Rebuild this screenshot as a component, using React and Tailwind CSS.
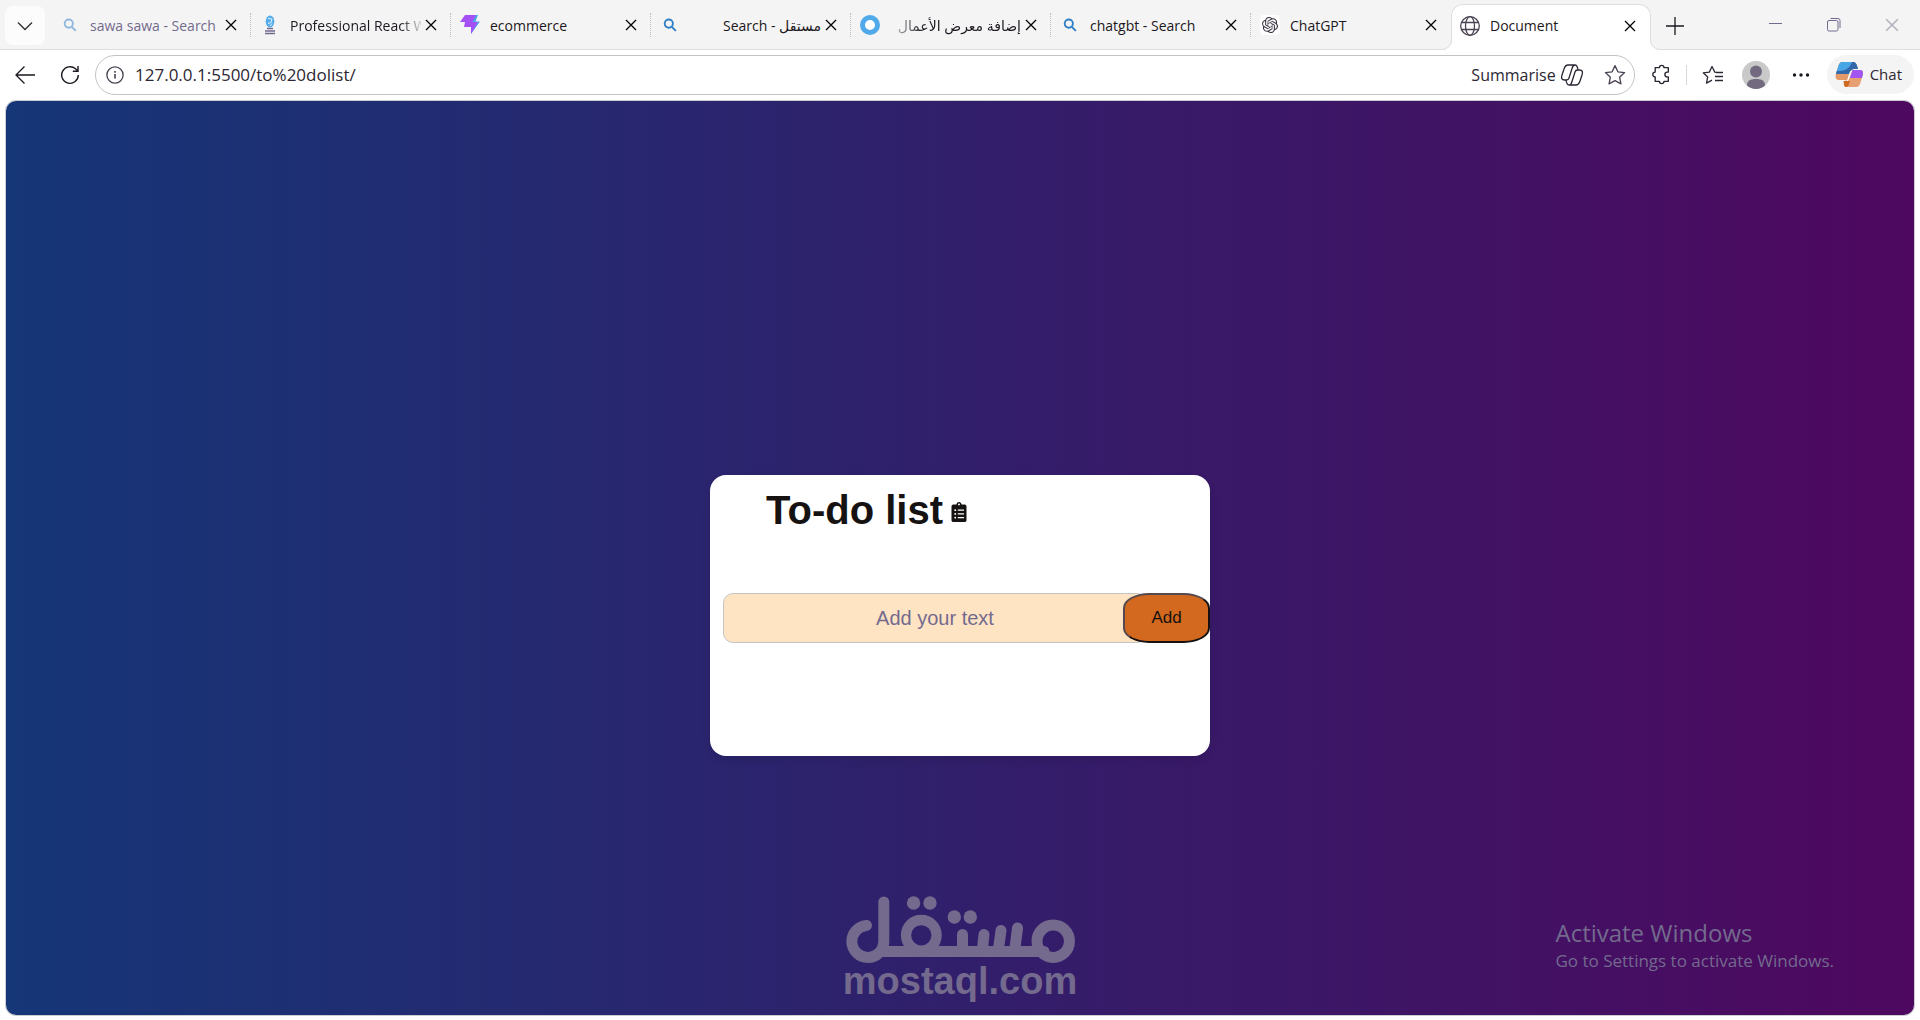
import React, { useState } from "react";
import { FaClipboardList } from "react-icons/fa";
import { SiOpenai } from "react-icons/si";

const tabs = [
  { title: "sawa sawa - Search", icon: "search", faded: true },
  { title: "Professional React W", icon: "react", fade: true },
  { title: "ecommerce", icon: "bolt" },
  { title: "مستقل - Search", icon: "search", rtl: true },
  { title: "إضافة معرض الأعمال", icon: "ring", rtl: true, fade: true },
  { title: "chatgbt - Search", icon: "search" },
  { title: "ChatGPT", icon: "openai", last: true },
  { title: "Document", icon: "globe", active: true },
];

function TabIcon({ name, faded }) {
  if (name === "search") {
    return (
      <svg viewBox="0 0 20 20" className={faded ? "size-5 shrink-0 opacity-50" : "size-5 shrink-0"} fill="none" stroke="#2f7fc8" strokeWidth="1.9">
        <circle cx="8.8" cy="8.6" r="4.1" />
        <path d="M11.800 11.800l4 4" />
      </svg>
    );
  }
  if (name === "react") {
    return (
      <svg viewBox="0 0 20 20" className="size-5 shrink-0" fill="none">
        <ellipse cx="10" cy="6.5" rx="4.3" ry="6" fill="#55aeea" />
        <path d="M8 3.500l4 .5-1 3.500-3 1M12 8.500l-2 2.500" stroke="#e4f2fd" />
        <path d="M7 13.500h6M5 16h10M5 18.500h10" stroke="#736a8e" strokeWidth="1.500" />
      </svg>
    );
  }
  if (name === "bolt") {
    return (
      <svg viewBox="0 0 20 20" className="size-5 shrink-0">
        <path d="M13 0h5l-2.500 6.500H20L11 19v-5z" fill="#4aa5e8" />
        <path d="M5 0h11l-3.500 7H18l-7 12v-7H4l1-5H0z" fill="#a550f5" />
      </svg>
    );
  }
  if (name === "ring") {
    return (
      <svg viewBox="0 0 20 20" className="size-5 shrink-0">
        <circle cx="10" cy="10" r="7.5" fill="#fff" stroke="#50aaea" strokeWidth="5" />
      </svg>
    );
  }
  if (name === "openai") {
    return (
      <span className="flex size-5 shrink-0 items-center justify-center rounded bg-white">
        <SiOpenai className="size-4 text-[#3b3342]" />
      </span>
    );
  }
  return (
    <svg viewBox="0 0 20 20" className="size-5 shrink-0" fill="none" stroke="#4b4352" strokeWidth="1.3">
      <circle cx="10" cy="10" r="9.3" />
      <ellipse cx="10" cy="10" rx="4.5" ry="9.3" />
      <path d="M1.500 6.500h17M1.500 13.500h17" />
    </svg>
  );
}

function Cross({ className }) {
  return (
    <svg viewBox="0 0 12 12" className={className} fill="none" stroke="currentColor" strokeWidth="1.3">
      <path d="M1 1l10 10M11 1L1 11" />
    </svg>
  );
}

function Tab({ tab }) {
  let mask = "";
  if (tab.fade) {
    mask = tab.rtl
      ? "[mask-image:linear-gradient(to_left,black_75%,rgba(0,0,0,0.15))]"
      : "[mask-image:linear-gradient(to_right,black_85%,rgba(0,0,0,0.15))]";
  }
  return (
    <div
      className={
        tab.active
          ? "relative z-10 mt-1 flex h-[46px] w-[200px] shrink-0 items-center rounded-t-xl border border-b-0 border-[#dedede] bg-white pr-[14px] pb-1 pl-2"
          : "flex h-[50px] w-[200px] shrink-0 items-center pl-[9px]"
      }
    >
      {tab.active && (
        <>
          <svg viewBox="0 0 10 10" className="absolute bottom-0 -left-[10px] size-[10px]">
            <path d="M10 0v10H0A10 10 0 0 0 10 0z" fill="#fff" />
            <path d="M0 9.500A9.500 9.500 0 0 0 9.500 0" fill="none" stroke="#dedede" />
          </svg>
          <svg viewBox="0 0 10 10" className="absolute -right-[10px] bottom-0 size-[10px]">
            <path d="M0 0v10h10A10 10 0 0 1 0 0z" fill="#fff" />
            <path d="M10 9.500A9.500 9.500 0 0 1 .5 0" fill="none" stroke="#dedede" />
          </svg>
        </>
      )}
      <TabIcon name={tab.icon} faded={tab.faded} />
      <div className="ml-[10px] flex min-w-0 flex-1 items-center justify-between gap-1">
        <button
          type="button"
          dir={tab.rtl ? "rtl" : "ltr"}
          className={`min-w-0 flex-1 text-start whitespace-nowrap ${tab.faded ? "text-[#736a8e]" : "text-[#1c1720]"} ${mask}`}
        >
          {tab.title}
        </button>
        <button type="button" aria-label={`Close ${tab.title}`}>
          <Cross className="size-3" />
        </button>
      </div>
      {!tab.active && <span className={`ml-[13px] h-6 border-l ${tab.last ? "border-transparent" : "border-dotted border-[#bdbdbd]"}`} />}
    </div>
  );
}

function TabBar() {
  return (
    <div className="flex h-[50px] items-start border-b border-[#dedede] bg-[#f4f4f4] text-[14px]">
      <button
        type="button"
        aria-label="Tab list"
        className="mt-[6px] mr-[6px] ml-[5px] flex h-[39px] w-10 items-center justify-center rounded-lg bg-[#fcfcfc]"
      >
        <svg viewBox="0 0 16 10" className="h-[10px] w-4" fill="none" stroke="#333" strokeWidth="1.4">
          <path d="M1 1.500l7 7 7-7" />
        </svg>
      </button>
      {tabs.map((tab) => (
        <Tab key={tab.title} tab={tab} />
      ))}
      <button type="button" aria-label="New tab" className="mt-4 ml-[14px]">
        <svg viewBox="0 0 20 20" className="size-5" stroke="#1c1720" strokeWidth="1.3">
          <path d="M1 10h18M10 1v18" />
        </svg>
      </button>
      <div className="mt-[18px] mr-[21px] ml-auto flex gap-11 text-[#736a8e]">
        <button type="button" aria-label="Minimise">
          <svg viewBox="0 0 14 14" className="size-[14px]" stroke="currentColor">
            <path d="M0 5.500h13" />
          </svg>
        </button>
        <button type="button" aria-label="Restore">
          <svg viewBox="0 0 14 14" className="size-[14px]" fill="none" stroke="currentColor">
            <rect x=".5" y="2.5" width="10.500" height="10.500" rx="1.500" />
            <path d="M3.500.5h7.500a2 2 0 0 1 2 2v7.500" />
          </svg>
        </button>
        <button type="button" aria-label="Close window" className="text-[#b5b0bd]">
          <Cross className="size-[14px]" />
        </button>
      </div>
    </div>
  );
}

function Toolbar({ url, onUrlChange }) {
  return (
    <div className="flex h-[51px] items-center bg-white pr-[6px] pb-[2px] pl-[15px] text-[#2d2733]">
      <button type="button" aria-label="Back">
        <svg viewBox="0 0 20 20" className="size-5" fill="none" stroke="#1c1720" strokeWidth="1.3">
          <path d="M20 10H1M9.500 1.500L1 10l8.500 8.500" />
        </svg>
      </button>
      <button type="button" aria-label="Refresh" className="ml-[25px]">
        <svg viewBox="0 0 20 20" className="size-5" fill="none" stroke="#1c1720" strokeWidth="1.4">
          <path d="M18.300 10a8.300 8.300 0 1 1-2.800-6.200L18 6M18 1v5.200h-5.200" />
        </svg>
      </button>
      <div className="ml-[15px] flex h-10 flex-1 items-center rounded-full border border-[#c4c4c4] pr-2 pl-[10px]">
        <button type="button" aria-label="Site information">
          <svg viewBox="0 0 20 20" className="size-[18px]" fill="none" stroke="#4b4352" strokeWidth="1.5">
            <circle cx="10" cy="10" r="9" />
            <path d="M10 9v5M10 5.500v2" strokeWidth="1.8" />
          </svg>
        </button>
        <input
          type="text"
          aria-label="Address"
          value={url}
          onChange={(e) => onUrlChange(e.target.value)}
          className="ml-[11px] min-w-0 flex-1 bg-transparent text-[17px] outline-none"
        />
        <button type="button" className="flex items-center gap-1 text-[16px]">
          Summarise
          <svg viewBox="0 0 24 22" className="h-[22px] w-6" fill="none" stroke="#2d2733" strokeWidth="1.3" strokeLinejoin="round">
            <path d="M15 1H8C6 1 5 2 4 5l-2 6c-1 3-.5 5 2.500 5h2c1.500 0 2-.5 2.500-2l3-9.500C12.500 2.500 13 1 15 1c1.800 0 2.500 1.500 3 5" />
            <path d="M9 21h7c2 0 3-1 4-4l2-6c1-3 .5-5-2.500-5h-2c-1.500 0-2 .5-2.500 2l-3 9.500c-.5 2-1 3.500-3 3.500-1.800 0-2.500-1.500-3-5" />
          </svg>
        </button>
        <button type="button" aria-label="Add to favourites" className="ml-5">
          <svg viewBox="0 0 20 20" className="size-[22px]" fill="none" stroke="#4b4352" strokeWidth="1.2" strokeLinejoin="round">
            <path d="M10 1.500l2.600 5.600 6.100.7-4.500 4.200 1.200 6.100L10 15.100l-5.400 3L5.800 12 1.300 7.800l6.100-.7z" />
          </svg>
        </button>
      </div>
      <button type="button" aria-label="Extensions" className="ml-4">
        <svg viewBox="0 0 20 20" className="size-[21px]" fill="none" stroke="#2d2733" strokeWidth="1.3" strokeLinejoin="round">
          <path d="M8 3.500a2.200 2.200 0 0 1 4.400 0h4.100v4.200H15.500a2.300 2.300 0 0 0 0 4.600h1v4.200h-4.100a2.200 2.200 0 0 1-4.400 0H4v-4.200a2.300 2.300 0 0 1 0-4.600V3.500z" />
        </svg>
      </button>
      <span className="ml-[14px] h-5 border-l border-[#d9d9d9]" />
      <button type="button" aria-label="Favourites" className="ml-[15px]">
        <svg viewBox="0 0 22 20" className="h-5 w-[22px]" fill="none" stroke="#2d2733" strokeWidth="1.3" strokeLinejoin="round">
          <path d="M14.500 7.300l-1.700-.2L10 1.500 7.300 7.100l-6.100.7 4.500 4.200-1.200 6.100 5.500-3" />
          <path d="M14 7.500h7M13 11.500h8M13 15.500h8" />
        </svg>
      </button>
      <button type="button" aria-label="Profile" className="ml-[18px]">
        <svg viewBox="0 0 28 28" className="size-7">
          <circle cx="14" cy="14" r="14" fill="#c9c9c9" />
          <circle cx="14" cy="10.5" r="6" fill="#736a80" />
          <path d="M5 24.500C5 20 8 18 14 18s9 2 9 6.500A14 14 0 0 1 14 28a14 14 0 0 1-9-3.500z" fill="#736a80" />
        </svg>
      </button>
      <button type="button" aria-label="Settings and more" className="ml-[21px]">
        <svg viewBox="0 0 20 20" className="size-5" fill="#1c1720">
          <circle cx="3.5" cy="10" r="1.7" />
          <circle cx="10" cy="10" r="1.7" />
          <circle cx="16.5" cy="10" r="1.7" />
        </svg>
      </button>
      <button type="button" className="ml-4 flex h-[39px] items-center gap-[7px] rounded-full bg-[#f4f4f4] pr-3 pl-2 text-[15px]">
        <svg viewBox="0 0 28 26" className="h-[26px] w-7">
          <path d="M7 0h11c2.500 0 3.500 2 4 4l1 3h-4c-2 0-3 1-3.500 3L13 18H4c-3.500 0-4-3-3-6l2-7c.8-3 2-5 4-5z" fill="#e39a68" />
          <path d="M7 0h11c2.500 0 3.500 2 4 4l1 3h-4c-2 0-3 1-3.500 3l-.5 2H1l2-7c.8-3 2-5 4-5z" fill="#48a5e6" />
          <path d="M17 0h1c2.500 0 3.500 2 4 4l1 3h-4c-2 0-3 1-3.500 3l-.5 2H1l.8-3C9 9 14 8 17 0z" fill="#3568a8" />
          <path d="M17.500 8H25c3 0 3.500 2.500 2.500 6l-2 6.500c-.8 2.700-2 4.500-4 4.500H11c-2 0-2.500-2-2-4l2-3 3-1z" fill="#e6a071" />
          <path d="M17.500 8H25c3 0 3.500 2.500 2.500 6l-.6 2H15z" fill="#a355f2" />
          <path d="M16.500 8.500l-3 9.500c-.6 1.500-1.500 2-3 2 3-2 2.500-8 5-11z" fill="#fff" />
          <path d="M8.500 19c.5 4 1 6 3 6 2 0 2.500-3 3.500-6z" fill="#d0681f" />
        </svg>
        Chat
      </button>
    </div>
  );
}

function TodoCard() {
  const [items, setItems] = useState([]);
  const [text, setText] = useState("");

  const handleSubmit = (e) => {
    e.preventDefault();
    if (!text.trim()) return;
    setItems([...items, text.trim()]);
    setText("");
  };

  return (
    <div className="mt-[374px] min-h-[281px] w-[500px] rounded-2xl bg-white pt-3 pl-[13px] font-['Liberation_Sans',Arial,sans-serif] shadow-[0_4px_8px_rgba(0,0,0,0.1)]">
      <h1 className="flex items-center gap-2 pl-[43px] text-[40px] leading-[46px] font-bold text-[#161212]">
        To-do list
        <FaClipboardList className="mt-1 h-5 w-4" />
      </h1>
      <form onSubmit={handleSubmit} className="mt-15 flex h-[50px]">
        <input
          type="text"
          aria-label="Add your text"
          placeholder="Add your text"
          value={text}
          onChange={(e) => setText(e.target.value)}
          className="min-w-0 flex-1 rounded-[10px] border border-[#c4c4c4] bg-[#ffe4c4] text-center text-[20px] outline-none placeholder:text-[#736a8e]"
        />
        <button
          type="submit"
          className="relative -ml-6 w-[87px] rounded-[30%] border-2 border-t-[#55494f] border-r-[#161212] border-b-[#161212] border-l-[#55494f] bg-[#d2691e] text-[17px] text-[#161212]"
        >
          Add
        </button>
      </form>
      {items.length > 0 && (
        <ul className="px-11 py-4 text-[17px]">
          {items.map((item, i) => (
            <li key={i}>{item}</li>
          ))}
        </ul>
      )}
    </div>
  );
}

function Watermark() {
  return (
    <div className="absolute inset-x-0 bottom-4 flex flex-col items-center text-[#736a8e]">
      <svg viewBox="25 14 230 67" className="h-[67px] w-[230px]" fill="none" stroke="currentColor" strokeWidth="11" strokeLinecap="round">
        <path d="M46.500 43.500A16 16 0 1 0 63.800 60V20" />
        <path d="M62 69.500h162" />
        <circle cx="101.3" cy="53.3" r="15.3" strokeWidth="10.300" />
        <circle cx="233.2" cy="59.2" r="16.2" />
        <path d="M142.500 52.500v14M164 52.500l-1.500 14M181 48.500l-2.500 18M197.500 46l-2.500 20" />
        <g fill="currentColor" stroke="none">
          <circle cx="93.6" cy="21" r="6.7" />
          <circle cx="110" cy="21" r="6.7" />
          <circle cx="134.3" cy="35" r="6.7" />
          <circle cx="150.3" cy="35" r="6.7" />
        </g>
      </svg>
      <span className="font-['Liberation_Sans',Arial,sans-serif] text-[38px] leading-9 font-bold">mostaql.com</span>
    </div>
  );
}

export default function App() {
  const [url, setUrl] = useState("127.0.0.1:5500/to%20dolist/");

  return (
    <div className="flex min-h-screen flex-col bg-white font-['Open_Sans','DejaVu_Sans',sans-serif]">
      <TabBar />
      <Toolbar url={url} onUrlChange={setUrl} />
      <main className="relative mx-[6px] mb-[5px] flex flex-1 flex-col items-center rounded-[10px] bg-linear-[90deg,#153677,#4e085f] shadow-[0_0_0_1px_#c9cdd0]">
        <TodoCard />
        <Watermark />
        <div className="absolute right-20 bottom-[42px] text-[#736a8e]">
          <p className="text-[24px] leading-8">Activate Windows</p>
          <p className="text-[17px] leading-6">Go to Settings to activate Windows.</p>
        </div>
      </main>
    </div>
  );
}
